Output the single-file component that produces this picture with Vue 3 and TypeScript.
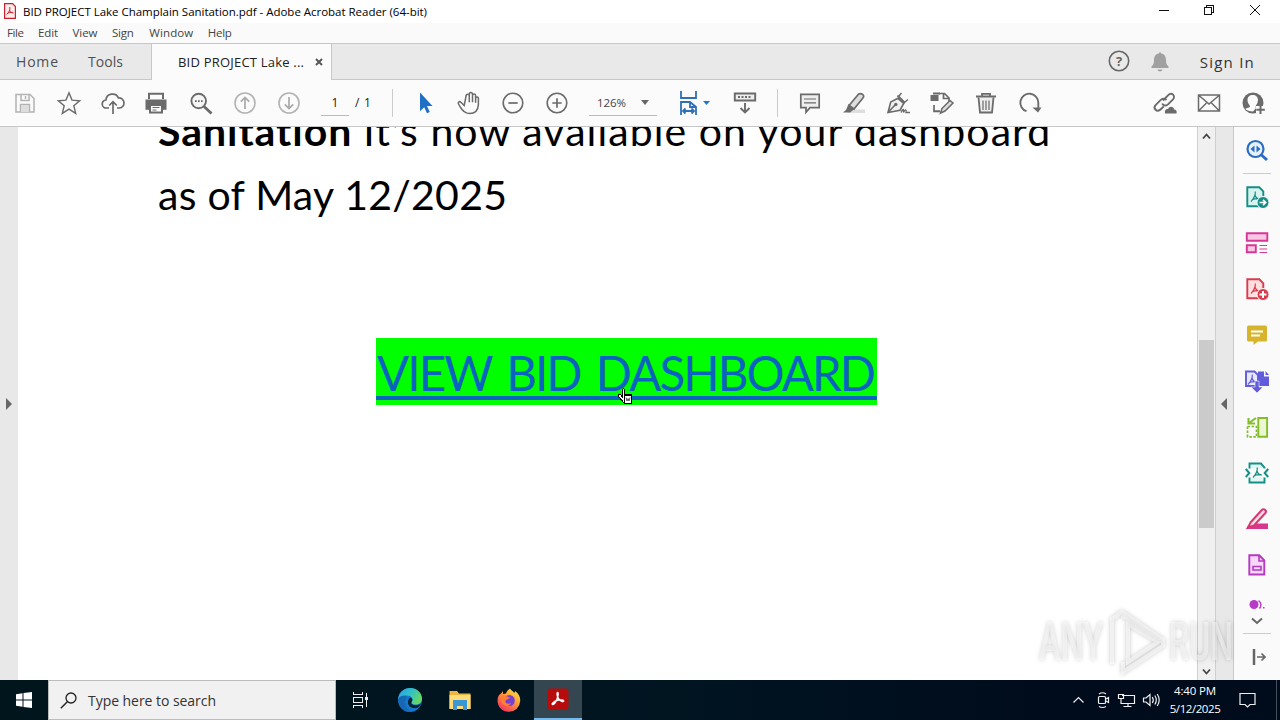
<script setup lang="ts">
import type { Directive } from 'vue'

interface Icon { name: string; body: string }

// Spreads a run of text over a given width with letter spacing
const vFit: Directive<HTMLElement, number> = {
  mounted(el, { value }) {
    const count = (el.textContent ?? '').length - 1
    if (count < 1) return
    const natural = el.getBoundingClientRect().width
    el.style.letterSpacing = `${(value - natural) / count}px`
  },
}

const g = '#6b6b6b'
const line = (d: string, c = g, w = 1.7, fill = 'none') =>
  `<path d="${d}" fill="${fill}" stroke="${c}" stroke-width="${w}"/>`
const acro = (c: string) =>
  line('M12.3 6.5c.3 4-1.5 7-4.3 10M12 10c.8 3 2.6 4 5 4M9 14.8c2-1 4.5-1.4 7-1.2', c, 1.2)

const fileIcons: Icon[] = [
  { name: 'Save', body: line('M3 3.5h14l4 4V21H3zM8 3.5v6h8v-6M7.500 21v-7.500h9V21', '#b3b3b3', 1.5) + '<path d="M8 14h8v7H8z" fill="#ddd"/><path d="M12.500 5v3" stroke="#b3b3b3" stroke-width="1.500"/>' },
  { name: 'Star', body: line('M12 1.800 15 9.100l7.700.600-5.900 5 1.900 7.700L12 18.200l-6.700 4.200 1.900-7.700-5.900-5L9 9.100z', g, 1.4) },
  { name: 'Upload', body: line('M8 17H5.500a4 4 0 0 1-.6-8A6.600 6.600 0 0 1 17.500 7a5 5 0 0 1 1 10H16M12 23V10.500M8.200 14.500 12 10.700l3.800 3.800') },
  { name: 'Print', body: `<g transform="translate(-1 0)"><path d="M1.500 8.500h21v10.300h-21z" fill="${g}"/>` + line('M5 8V2.800h14V8', g, 2) + line('M6 14h12v7.500H6z', g, 2, '#fff') + line('M8.500 16.500h7M8.500 19h4', g, 1) + '</g>' },
  { name: 'Find', body: line('M17 10a7.300 7.300 0 1 1-14.600 0A7.300 7.300 0 0 1 17 10z', g, 1.9, '#f5f5f5') + line('m15 15.500 7.500 7', g, 2.8) + `<path d="M6 9.200h1.700v1.700H6zm3 0h1.700v1.700H9zm3 0h1.700v1.700H12z" fill="${g}"/>` },
  { name: 'Previous', body: '<circle cx="12" cy="12" r="10" fill="none" stroke="#b3b3b3" stroke-width="1.600"/>' + line('M12 18V6.500M7.800 10.700 12 6.500l4.200 4.200', '#aaa') },
  { name: 'Next', body: '<circle cx="12" cy="12" r="10" fill="none" stroke="#b3b3b3" stroke-width="1.600"/>' + line('M12 6v11.500M7.800 13.300l4.200 4.200 4.200-4.200', '#aaa') },
]

const viewIcons: Icon[] = [
  { name: 'Select', body: '<path d="M7 1.500v18.700l4.200-4 2.800 6 2.800-1.300-2.800-5.900h5.500z" fill="#1f6fc4"/>' },
  { name: 'Hand', body: line('M7.200 14.500 3.900 11.200c-1.600-1.400-3.500.400-2.200 2.200 2.500 3.600 4.500 9.200 10.800 9.200 6 0 8.600-4 8.900-9V7.200c-.2-1.700-2.600-1.600-2.800 0v4.500V4.300c-.2-1.800-3-1.700-3.100 0v6.900V3c-.2-1.900-3.100-1.800-3.200 0v8.200V4.500c-.2-1.800-3-1.700-3.100 0z', g, 1.5) },
  { name: 'Zoom out', body: `<circle cx="12" cy="12" r="9.800" fill="none" stroke="${g}" stroke-width="1.600"/>` + line('M7.300 12h9.400') },
  { name: 'Zoom in', body: `<circle cx="12" cy="12" r="9.800" fill="none" stroke="${g}" stroke-width="1.600"/>` + line('M7.300 12h9.400M12 7.300v9.400') },
]

const editIcons: Icon[] = [
  { name: 'Comment', body: line('M2.800 3.300h18.400v13.400H12l-4 4.500v-4.500H2.800z', g, 1.700, '#eee') + line('M6 8h12M6 11.800h12', g, 1.2) },
  { name: 'Highlight', body: '<path d="M8 18.500h15v3.500H6z" fill="#ddd"/>' + line('m7 14.500 9-10.800q2-2 4.400-.4t.300 4L12 18z', g, 1.7, '#ddd') + `<path d="m6.500 13 6 5-4.500 3.500H1l3-2.500z" fill="${g}"/>` },
  { name: 'Sign', body: line('m2 21.500 2.700-10.500L12 7.300l5.700 5.200-3.700 6.700zM2 21.500l7-7.500', g, 1.6, '#f1f1f1') + line('m11.500 4.500 7.500 7.500', g, 2) + line('m13 5 2.500-3M19 11l3-2.500', g, 1.4) + `<circle cx="9.800" cy="13.500" r="1.700" fill="${g}"/>` + line('M15 21.500c2-4 3-4 2.500 0 2-4 3-3 2.500 0h4', g, 1.4) },
  { name: 'Edit page', body: `<path d="M.5 4h8v6h-8zM3 1.500h7v2H3z" fill="${g}"/>` + line('M8.500 2.500h6L19 7v4M13.500 3v4.500H19M4 14v6.500h6M4 20h6', g, 1.700) + line('m12 17.500 8-8 3 2.500-8 8-4.500 2z', g, 1.5, '#ddd') },
  { name: 'Delete', body: line('M4.500 6.500 6 21.500h12l1.500-15', g, 1.800, '#eee') + line('M2 5.500h20M8 5V2.800h8V5', g, 1.8) + line('M9 9.500V19M12 9.500V19M15 9.500V19', g, 1.2) },
  { name: 'Rotate', body: line('M8.500 20.200a9 9 0 1 1 11.800-8.700v6', g, 1.9) + `<path d="M14.500 16.500h9l-3.500 5z" fill="${g}"/>` },
]

const shareIcons: Icon[] = [
  { name: 'Link', body: line('M10 9.500 15 4.300c3.800-3.800 8 .8 5 4l-5 5c-2 2-5 1.200-5.800-.8M13.500 9c-1.800-2-4.500-1.500-5.700-.2l-5 5c-3.300 3.300 1 8.400 5 4.500l3-3', g, 1.9) + `<path d="M12 22.500c-.8-3.500 1.200-5 3-4.500 1.500-3.500 6-2.500 6 .5 2.500 0 3 2 2.500 4z" fill="${g}"/>` },
  { name: 'Mail', body: line('M1.500 4h21v16h-21zM2 4.500l10 8.500 10-8.500M2 19.500 9.500 12M22 19.500 14.500 12', g, 1.5) },
  { name: 'Add person', body: `<circle cx="12" cy="12" r="10.500" fill="${g}"/><path d="M9 15.500c0-1.500-2.500-3-2.500-6.500 0-3 2-5 5.200-5S17 6 17 9c0 3.500-2.300 5-2.300 6.500v2L12 20.500c-3.500 0-6.500-1-7.500-2.500 1-1.500 4.500-1 4.500-2.500z" fill="#fbfbfb"/><path d="M15 15h9v9h-9z" fill="#fbfbfb"/>` + line('M19.500 14.500v8.500M15.300 18.700h8.500', g, 2) },
]

const sideTools: Icon[] = [
  { name: 'Export', body: line('M2.300 2.300h12l4 4v15h-16z', '#148f85', 1.9, '#d7f2ef') + acro('#148f85').replace('<path', '<path transform="translate(-2 0)"') + '<circle cx="18" cy="17.500" r="6" fill="#148f85" stroke="#fafafa"/>' + line('M14.500 17.500h6M18 14.800l2.700 2.700-2.700 2.700', '#fff', 1.7) },
  { name: 'Organize', body: line('M1.800 2.300h20.500v7.500H1.800zM1.800 14.300h9v7h-9z', '#d53798', 1.9, '#f7c7e3') + line('M14.500 14.500H22M14.500 18H22M14.500 21.500H22', '#d53798', 1.1) },
  { name: 'Create', body: line('M2.300 2.300h12l4 4v15h-16z', '#d83b4c', 1.9, '#ffdfdf') + acro('#d83b4c').replace('<path', '<path transform="translate(-2 0)"') + '<circle cx="18" cy="17.500" r="6" fill="#d83b4c" stroke="#fafafa"/>' + line('M14.500 17.500h7M18 14v7', '#fff', 2) },
  { name: 'Comments', body: '<path d="M3.500 2.500h17a1.500 1.500 0 0 1 1.500 1.500v13a1.500 1.500 0 0 1-1.500 1.500H13L8.500 22v-3.500h-5A1.500 1.500 0 0 1 2 17V4a1.500 1.500 0 0 1 1.500-1.500z" fill="#d7b42b"/>' + line('M6 8.500h12M6 12.500h9', '#fff', 1.8) },
  { name: 'Combine', body: '<path d="M13 2.500h6v5h5v9.500H13z" fill="#625bdc"/><path d="M20.500 2 24 6h-3.500z" fill="#625bdc"/>' + line('M1 2.500h8.500l3.500 3.500v11H1z', '#625bdc', 1.9, '#e9e8ff') + acro('#625bdc').replace('<path', '<path transform="translate(-5 -1)"') + '<path d="M10 12h4v6h4l-6 6-6-6h4z" fill="#625bdc" stroke="#fafafa" stroke-width=".6"/>' },
  { name: 'Scan', body: line('M13.300 3h8.800v18.800h-8.800z', '#84bd2c', 1.9, '#eaf7d0') + '<path d="M2.500 11.500h9v10.300h-9z" fill="none" stroke="#84bd2c" stroke-width="1.700" stroke-dasharray="2.500 1.500"/>' + line('M11 3 4 8M3.500 3v5.500H10', '#84bd2c', 2.1) },
  { name: 'Compress', body: line('M4.500 7.500v-5H16l3.500 4v1M4.500 16.500v5h15v-5', '#148f85', 1.9, '#e2f6f4') + acro('#148f85') + line('m.8 8 3.500 4-3.500 4M23.200 8l-3.500 4 3.500 4', '#148f85', 2) },
  { name: 'Redact', body: '<path d="m11 16.500h12v5.500H1l2-3.500z" fill="#d83790"/>' + line('M5.500 15.500 17 2.800q1.500-1.300 3.200.2t.2 3L9 18.500l-6 2z', '#d83770', 2, '#ffdbe5') },
  { name: 'Fill form', body: line('M4.300 2.300h10l5 5.200v14h-15z', '#b23bc0', 1.9, '#f8d7fb') + line('M14 2.500V8h5M8 13.500h8v3.500H8z', '#b23bc0', 1.6) },
]
</script>

<template>
  <div class="screen">
    <header class="title">
      <svg class="app-mark" viewBox="0 0 12 16"><path d="M.6.600h8L11.400 3.500v11.900H.6z" fill="#ffecec" stroke="#c8202c" stroke-width="1.200" /><path d="M5.800 4c.5 3-1 5.500-3.200 7.500M5.500 7c.6 2 2 3 4 3M3.300 10.500c1.500-1 3.500-1.300 5.500-1.200" fill="none" stroke="#c8202c" /></svg>
      <span v-fit="404">BID PROJECT Lake Champlain Sanitation.pdf - Adobe Acrobat Reader (64-bit)</span>
      <svg class="win" viewBox="0 0 110 20" fill="none" stroke="#111" shape-rendering="crispEdges"><path d="M9 10.500h10M54.500 7.500h7v7h-7zM56.500 7V5.500h7v7H62" /><path d="m100 5 10 10m0-10-10 10" shape-rendering="auto" /></svg>
    </header>
    <nav class="menu">
      <span v-fit="17">File</span><span v-fit="20">Edit</span><span v-fit="25">View</span><span v-fit="22">Sign</span><span v-fit="44">Window</span><span v-fit="24">Help</span>
    </nav>
    <div class="tabs">
      <span class="tab home"><b v-fit="42">Home</b></span>
      <span class="tab"><b v-fit="35">Tools</b></span>
      <div class="tab-open"><span v-fit="126">BID PROJECT Lake ...</span><svg viewBox="0 0 8 8"><path d="m1 1 6 6m0-6L1 7" stroke="#555" stroke-width="1.900" /></svg></div>
      <div class="account">
        <svg class="help" viewBox="0 0 22 22"><circle cx="11" cy="11" r="9.700" fill="none" stroke="#666" stroke-width="1.600" /><text x="11" y="15.500">?</text></svg>
        <svg class="bell" viewBox="0 0 18 20"><path d="M8 1.500V.5h2v1c4 .5 5 3.500 5 7 0 3 .8 4.500 2.500 6v1.500H.5v-1.500C2.200 13 3 11.500 3 8.500c0-3.500 1-6.500 5-7zM6.500 17.500h5c-.5 2.500-4.500 2.500-5 0z" fill="#a0a0a0" /></svg>
        <span v-fit="54">Sign In</span>
      </div>
    </div>
    <div class="toolbar">
      <div class="group files"><i v-for="icon in fileIcons" :key="icon.name" class="cell"><svg viewBox="0 0 24 24" v-html="icon.body" /></i></div>
      <div class="page-box">1</div><span class="page-total">/ 1</span>
      <div class="rule first" />
      <div class="group views"><i v-for="icon in viewIcons" :key="icon.name" class="cell"><svg viewBox="0 0 24 24" v-html="icon.body" /></i></div>
      <div class="zoom-box"><span v-fit="29">126%</span><svg viewBox="0 0 8 5"><path d="M0 0h8L4 5z" fill="#666" /></svg></div>
      <svg class="fit" viewBox="0 0 34 26" fill="none" stroke="#2e6fb5" stroke-width="1.800"><path d="M2 1v7h15V1M2 25V12h9l6 5v8M11 12v5h6M4 21h11M6.500 18.500 4 21l2.500 2.500M12.500 18.500 15 21l-2.500 2.500" /><path d="M24 11h7l-3.500 4z" fill="#2477c8" stroke="none" /></svg>
      <svg class="scroll-mode" viewBox="0 0 24 24" fill="none" stroke="#6b6b6b"><path d="M1.800 2.500h20.400v7H1.800z" stroke-width="1.900" fill="#eee" /><path d="M5 6h14" stroke-width="1.800" stroke-dasharray="2 1.500" /><path d="M12 12v9.500m-4.500-4.500 4.500 4.500 4.500-4.500" stroke-width="1.900" /></svg>
      <div class="rule second" />
      <div class="group edits"><i v-for="icon in editIcons" :key="icon.name" class="cell"><svg viewBox="0 0 24 24" v-html="icon.body" /></i></div>
      <div class="group shares"><i v-for="icon in shareIcons" :key="icon.name" class="cell"><svg viewBox="0 0 24 24" v-html="icon.body" /></i></div>
    </div>
    <main class="work">
      <aside class="left-strip"><svg viewBox="0 0 6 12"><path d="m0 0 6 6-6 6z" fill="#666" /></svg></aside>
      <article class="page">
        <p class="line one"><strong v-fit="194">Sanitation</strong><span v-fit="687">It's now available on your dashboard</span></p>
        <p class="line two"><span v-fit="349">as of May 12/2025</span></p>
        <a class="cta"><span v-fit="499">VIEW BID DASHBOARD</span></a>
      </article>
      <div class="scrollbar">
        <svg viewBox="0 0 9 7"><path d="m1 5.500 3.500-4 3.500 4" /></svg>
        <div class="thumb" />
        <svg viewBox="0 0 9 7"><path d="m1 1.500 3.500 4 3.500-4" /></svg>
      </div>
      <div class="right-strip"><svg viewBox="0 0 6 12"><path d="M6 0 0 6l6 6z" fill="#666" /></svg></div>
      <aside class="tools">
        <svg class="search-tool" viewBox="0 0 24 24"><circle cx="10.500" cy="11" r="8" fill="#e7f1fc" stroke="#2a6cc2" stroke-width="2.200" /><path d="m16.500 17 5.500 5" stroke="#2a6cc2" stroke-width="3" /><path d="M9.500 7.500v7L5.500 11zM11.500 7.500v7l4-3.500z" fill="#2a6cc2" /></svg>
        <hr>
        <svg v-for="icon in sideTools" :key="icon.name" class="tool" viewBox="0 0 24 24" v-html="icon.body" />
        <svg class="partial" viewBox="0 0 18 9"><circle cx="6" cy="4.500" r="4.500" fill="#b83bc6" /><path d="M10.500.5c3 2 3 5.500 1 8" fill="none" stroke="#b83bc6" stroke-width="1.500" /><path d="M15 7h1.500v1.500H15z" fill="#b83bc6" /></svg>
        <svg class="more" viewBox="0 0 12 8"><path d="m1 1.500 5 4.500 5-4.500" fill="none" stroke="#666" stroke-width="2" /></svg>
        <hr class="low">
        <svg class="collapse" viewBox="0 0 15 16"><path d="M2 0v16" stroke="#666" stroke-width="2.500" /><path d="M5 8h8M9.500 4.500 13 8l-3.500 3.500" fill="none" stroke="#666" stroke-width="1.700" /></svg>
      </aside>
    </main>
    <footer class="taskbar">
      <div class="start"><svg viewBox="0 0 16 16"><path d="M0 2.200 6.500 1.300v6.200H0zM7.500 1.100 16 0v7.500H7.500zM0 8.500h6.500v6.200L0 13.800zM7.500 8.500H16V16l-8.500-1.100z" fill="#fff" /></svg></div>
      <div class="search"><svg viewBox="0 0 17 17"><circle cx="11" cy="6" r="5" fill="none" stroke="#222" stroke-width="1.300" /><path d="M7.300 9.700.8 16.200" stroke="#222" stroke-width="1.400" /></svg><span v-fit="128">Type here to search</span></div>
      <div class="apps">
        <i><svg class="task-view" viewBox="0 0 17 16" fill="none" stroke="#eee" shape-rendering="crispEdges"><path d="M1.500 0v2.500h9V0M1.500 5.500h9v5h-9zM1.500 16v-2.500h9V16M14.500 1v14" /><path d="M13 5h3v3h-3z" fill="#eee" stroke="none" /></svg></i>
        <i><svg viewBox="0 0 24 24"><defs><linearGradient id="eg" x1="0" y1="0" x2="1" y2=".5"><stop offset="0" stop-color="#279de3" /><stop offset=".5" stop-color="#31bfca" /><stop offset="1" stop-color="#65d665" /></linearGradient></defs><circle cx="12" cy="12" r="12" fill="#1479ce" /><path d="M.2 11C1 4 6 0 12 0c7 0 12 5 12 10.500 0 4-3 6-6 6-4 0-5-1.500-4-3 2-3-1-6-5-6C4 7 1 9 .2 11z" fill="url(#eg)" /><path d="M9 9c-4 5-1 13 5 14.800C8 25.500.5 20 .3 12 1 8 6 6.500 9 9z" fill="#1767b5" /><path d="M12 9.500c3 1 2.500 3 1.500 4.500s1 3.200 4 3.200c2 0 4-.5 5.500-1.700-1.500 4.500-5 5-7.500 4.500-6-1-7-7-3.500-10.500z" fill="#062334" /></svg></i>
        <i><svg viewBox="0 0 24 24"><path d="M1.500 3h7.500l2 2.500h11.500V21h-21z" fill="#efb63d" /><path d="M1.500 7h21v14h-21z" fill="#ffdc78" /><path d="M5 12h14v10h-4v-4H9v4H5z" fill="#3c98d4" /></svg></i>
        <i><svg viewBox="0 0 24 24"><defs><linearGradient id="fx" x1=".9" y1="0" x2=".2" y2="1"><stop offset="0" stop-color="#ffe747" /><stop offset=".4" stop-color="#ffa436" /><stop offset="1" stop-color="#f22d62" /></linearGradient></defs><path d="M4 5.500 6 3v3l3-.5C9.500 3 13 .5 13 .5c1 2 3 2.500 4.500 4.500l.5-2c4 2.500 5.500 7 5.200 10A11.300 11.300 0 0 1 12 23.800C5.500 24 .5 19 .5 12.500.5 9 2 6.500 4 5.500z" fill="url(#fx)" /><circle cx="12.300" cy="12.500" r="5.500" fill="#7741cc" /><path d="M4 8c3-1 6 0 9 2l-4 2c-2 3 2 5 5 3-2 5-9 3-10-2z" fill="#ff7d35" /></svg></i>
        <i class="active"><svg viewBox="0 0 24 24"><rect x="1.500" y="1.500" width="21" height="21" rx="3" fill="#b80c0c" /><path d="M11.500 5.500c1 0 .8 2 .2 4.500-1 3.500-3 7-5 7.500-2-.5 2-3.500 5-4.200 3-.8 6-.5 6 .6 0 1.600-4.500-.3-5.500-3-1.200-2-1.500-5-.7-5.400z" fill="none" stroke="#fff" stroke-width="1.400" /></svg></i>
      </div>
      <div class="tray">
        <svg class="tray-icons" viewBox="0 0 90 20" fill="none" stroke="#eee" stroke-width="1.200"><path d="m1.500 12.500 5-5 5 5" /><rect x="26.500" y="6.500" width="7" height="7" rx="1" /><path d="m34 9 2.500-1.500v5L34 11M27 4q3.500-2.500 7 0M27 16.500q3.500 2 7 0M50 5.500h12.500v8H49V10M56 14v3M51.500 16.500h8M46.500 4.500h5v4h-5zM49 8.500V11M71.500 8v4h2.500l4 3.500v-11L74 8zM80.300 7q2 3 0 6M82.800 5.500q3 4.500 0 9M85.200 4q4 6 0 12" /></svg>
        <div class="clock"><span v-fit="42">4:40 PM</span><span v-fit="51">5/12/2025</span></div>
        <svg class="notice" viewBox="0 0 17 17"><path d="M1 1.500h15v11h-5L8.500 15 6 12.500H1z" fill="none" stroke="#eee" stroke-width="1.200" /></svg>
        <div class="peek" />
      </div>
    </footer>
    <svg class="watermark" viewBox="0 0 200 72">
      <g class="mark-text"><text x="3" y="54" textLength="64" lengthAdjust="spacingAndGlyphs">ANY</text><text x="133" y="54" textLength="64" lengthAdjust="spacingAndGlyphs">RUN</text></g>
      <path d="M92 18v38l30-20zM76 58V13l10-7 41 28v6L87 66V56M86 9l38 25" />
    </svg>
    <svg class="pointer" viewBox="0 0 15 17" shape-rendering="crispEdges"><path d="M4.500 9.500V1.500q1-2 2 0v5h7v9h-7L.5 8.500v-2h2z" fill="#fff" stroke="#000" /><path d="M6.500 7.500h7v8h-7z" fill="#fff" stroke="#000" /><path d="m8 9.500 1 3.500 1-2.500 1 2.500 1-3.500" fill="none" stroke="#333" stroke-width=".8" shape-rendering="auto" /></svg>
  </div>
</template>

<style>
html, body { margin: 0; overflow: hidden; }
</style>

<style scoped>
.screen { position: relative; width: 1280px; height: 720px; display: flex; flex-direction: column; overflow: hidden; background: #fff; color: #222; font-family: "Open Sans", "Noto Sans", sans-serif; font-size: 12px; }
.screen * { box-sizing: border-box; }
svg { display: block; flex: none; overflow: visible; }
span { white-space: nowrap; }
.title { height: 23px; flex: none; display: flex; align-items: center; padding-left: 4px; color: #000; font-size: 11.500px; }
.app-mark { width: 12px; height: 16px; margin: -2px 7px 0 0; }
.win { width: 110px; height: 20px; margin: -3px 20px 0 auto; }
.menu { height: 20px; flex: none; display: flex; align-items: center; gap: 14.500px; padding: 0 0 2px 7px; background: #fafafa; color: #444; font-size: 11.500px; }
.menu span:nth-child(5) { margin-left: 1px; }
.tabs { height: 37px; flex: none; display: flex; border-top: 1px solid #c8c8c8; border-bottom: 1px solid #c8c8c8; background: #e9e9e9; font-size: 14px; }
.tab { display: flex; align-items: center; width: 72px; padding-left: 0; color: #505050; }
.tab.home { width: 88px; padding-left: 16px; }
.tab b { font-weight: 400; white-space: nowrap; }
.tab-open { width: 181px; height: 36px; margin-left: -9px; display: flex; align-items: center; padding-left: 26px; background: #fbfbfb; border: solid #c8c8c8; border-width: 0 1px; font-size: 13px; }
.tab-open svg { width: 8px; height: 8px; margin-left: auto; margin-right: 8px; }
.account { display: flex; align-items: center; margin-left: auto; padding-right: 25px; color: #333; font-size: 15px; }
.help { width: 22px; height: 22px; margin-right: 21px; margin-top: -2px; }
.help text { font: 700 13px "Open Sans", sans-serif; fill: #666; text-anchor: middle; }
.bell { width: 18px; height: 20px; margin-right: 31px; }
.toolbar { height: 47px; flex: none; display: flex; align-items: center; padding: 0 5px 0 3px; border-bottom: 1px solid #c6c6c6; background: #fbfbfb; }
.group { display: flex; }
.cell { width: 44px; display: grid; place-items: center; }
.cell svg { width: 24px; height: 24px; }
.page-box { width: 28px; height: 26px; margin-left: 10px; border-bottom: 1px solid #bbb; text-align: center; line-height: 25px; }
.page-total { margin-left: 6px; width: 17px; margin-top: -1px; letter-spacing: .8px; }
.rule { width: 1px; height: 28px; background: #ccc; }
.rule.first { margin-left: 20px; }
.views { margin-left: 10px; }
.zoom-box { width: 68px; height: 26px; margin-left: 10px; padding: 0 8px; display: flex; align-items: center; justify-content: space-between; border-bottom: 1px solid #bbb; color: #444; font-size: 11.500px; }
.zoom-box svg { width: 8px; height: 5px; }
.fit { width: 34px; height: 26px; margin-left: 22px; }
.scroll-mode { width: 24px; height: 24px; margin-left: 20px; }
.rule.second { margin-left: 20px; }
.edits { margin-left: 10px; }
.shares { margin-left: auto; }
.work { height: 553px; flex: none; display: flex; }
.left-strip { width: 18px; display: grid; place-items: center; background: #e8e8e8; }
.left-strip svg, .right-strip svg { width: 6px; height: 12px; }
.right-strip svg { margin-right: 2px; }
.page { width: 1179px; padding-left: 140px; overflow: hidden; color: #000; font-family: Lato, "Open Sans", sans-serif; }
.line { margin: 0; font-size: 41px; line-height: 64px; height: 64px; white-space: nowrap; }
.line.one { margin-top: -28px; display: flex; }
.line.one span { margin-left: 11px; }
.line.one strong { font-weight: 700; }
.cta { display: block; width: 501px; height: 67px; margin: 111px 0 0 218px; padding-left: 1px; background: #0f0; color: #0b63c0; font-size: 47.500px; word-spacing: 5px; line-height: 69px; background-image: linear-gradient(#0b63c0, #0b63c0); background-size: 100% 4px; background-position: 0 58px; background-repeat: no-repeat; }
.scrollbar { width: 19px; display: flex; flex-direction: column; align-items: center; border: solid #cfcfcf; border-width: 0 1px; background: #f0f0f0; padding: 6px 0 5px; }
.scrollbar svg { width: 9px; height: 7px; fill: none; stroke: #444; stroke-width: 1.800; }
.thumb { width: 15px; height: 188px; margin: 200px 0 auto; background: #cbcbcb; }
.right-strip { width: 18px; display: grid; place-items: center; background: #e8e8e8; border-right: 1px solid #c8c8c8; }
.tools { width: 46px; display: flex; flex-direction: column; align-items: center; background: #fafafa; }
.search-tool { width: 24px; height: 24px; margin-top: 11px; }
hr { width: 28px; height: 1px; margin: 11px 0; border: 0; background: #ccc; }
.tool { width: 24px; height: 24px; margin-bottom: 22px; }
.partial { width: 18px; height: 9px; margin-top: 1px; }
.more { width: 12px; height: 8px; margin-top: 8px; }
hr.low { margin: 8px 0 15px; }
.collapse { width: 15px; height: 16px; margin-left: 5px; }
.taskbar { height: 40px; flex: none; display: flex; background: linear-gradient(90deg, #00151c, #001521 50%, #000b1c 85%); }
.start { width: 48px; display: grid; place-items: center; }
.start svg { width: 16px; height: 16px; }
.search { width: 288px; display: flex; align-items: center; gap: 11px; padding-left: 11px; background: #f1f1f1; border: 1px solid #bcbcbc; color: #333; font-size: 14px; }
.search svg { width: 17px; height: 17px; }
.apps { display: flex; }
.apps i { width: 49.500px; height: 40px; display: grid; place-items: center; }
.apps i.active { width: 48px; background: #34464f; border-bottom: 2px solid #76b9ed; }
.apps svg { width: 24px; height: 24px; }
.apps svg.task-view { width: 17px; height: 16px; }
.tray { margin-left: auto; display: flex; align-items: center; color: #fff; }
.tray-icons { width: 90px; height: 20px; margin-right: 6px; }
.clock { width: 54px; display: flex; flex-direction: column; align-items: center; font-size: 11.500px; line-height: 18px; }
.notice { width: 17px; height: 17px; margin: 1px 20px 0 17px; }
.peek { width: 1px; height: 40px; background: #46505c; margin-right: 3px; }
.watermark { position: absolute; left: 1036px; top: 606px; width: 200px; height: 72px; filter: drop-shadow(0 0 2px rgba(0, 0, 0, .38)); }
.mark-text { font: 500 53px Roboto, sans-serif; fill: rgba(255, 255, 255, .5); }
.watermark path { fill: none; stroke: rgba(255, 255, 255, .55); stroke-width: 4; }
.pointer { position: absolute; left: 618px; top: 388px; width: 15px; height: 17px; }
</style>
